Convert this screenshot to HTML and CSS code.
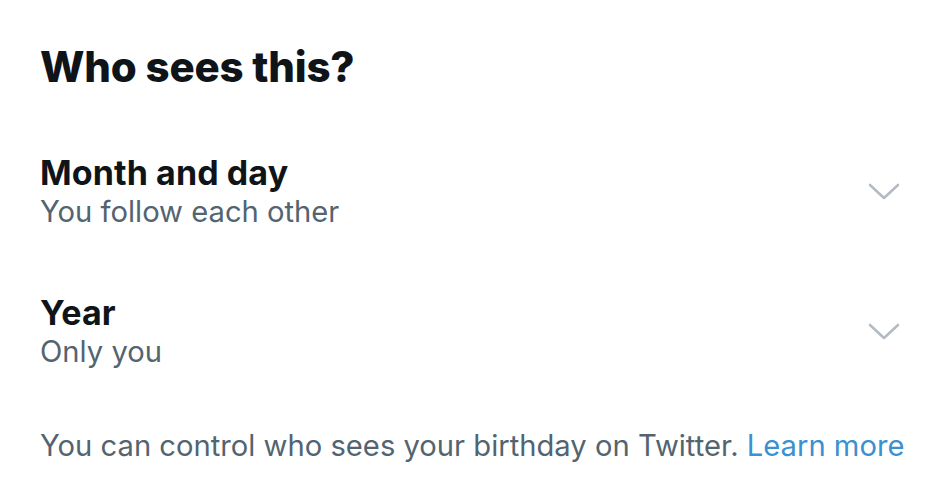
FILE: index.html
```html
<!DOCTYPE html>
<html lang="en">
<head>
<meta charset="utf-8">
<link rel="stylesheet" href="styles.css">
</head>
<body>
<main class="panel">
  <h1 class="title">Who sees this?</h1>
  <div class="row">
    <div class="texts">
      <div class="label">Month and day</div>
      <div class="value">You follow each other</div>
    </div>
    <svg class="chev" viewBox="0 0 32 18" width="32" height="18"><path d="M2 2 L16 15 L30 2" fill="none" stroke="#b3bcc4" stroke-width="2.6" stroke-linecap="round" stroke-linejoin="round"/></svg>
  </div>
  <div class="row row-second">
    <div class="texts">
      <div class="label">Year</div>
      <div class="value">Only you</div>
    </div>
    <svg class="chev" viewBox="0 0 32 18" width="32" height="18"><path d="M2 2 L16 15 L30 2" fill="none" stroke="#b3bcc4" stroke-width="2.6" stroke-linecap="round" stroke-linejoin="round"/></svg>
  </div>
  <p class="note">You can control who sees your birthday on Twitter. <a class="link" href="#">Learn more</a></p>
</main>
</body>
</html>
```
FILE: styles.css
```css
html, body {
  margin: 0;
  padding: 0;
  background: #ffffff;
}
body {
  font-family: Inter, "Noto Sans", sans-serif;
  color: #0f1419;
}
.panel {
  width: 941px;
  height: 495px;
  box-sizing: border-box;
  padding: 39px 40px 0 40px;
  display: flex;
  flex-direction: column;
}
.title {
  margin: 0;
  font-size: 42px;
  line-height: 56px;
  font-weight: 800;
  letter-spacing: -0.2px;
}
.row {
  display: flex;
  align-items: center;
  justify-content: space-between;
  margin-top: 58px;
  margin-right: 1px;
}
.row-second {
  margin-top: 62px;
}
.texts {
  display: flex;
  flex-direction: column;
}
.label {
  font-size: 34px;
  line-height: 40px;
  font-weight: 700;
  letter-spacing: 0.1px;
}
.value {
  font-size: 29.2px;
  line-height: 38px;
  color: #536471;
}
.chev {
  display: block;
}
.note {
  margin: 56px 0 0 0;
  font-size: 29.2px;
  line-height: 38px;
  color: #536471;
  white-space: nowrap;
}
.link {
  color: #3a90d0;
  text-decoration: none;
}
```
